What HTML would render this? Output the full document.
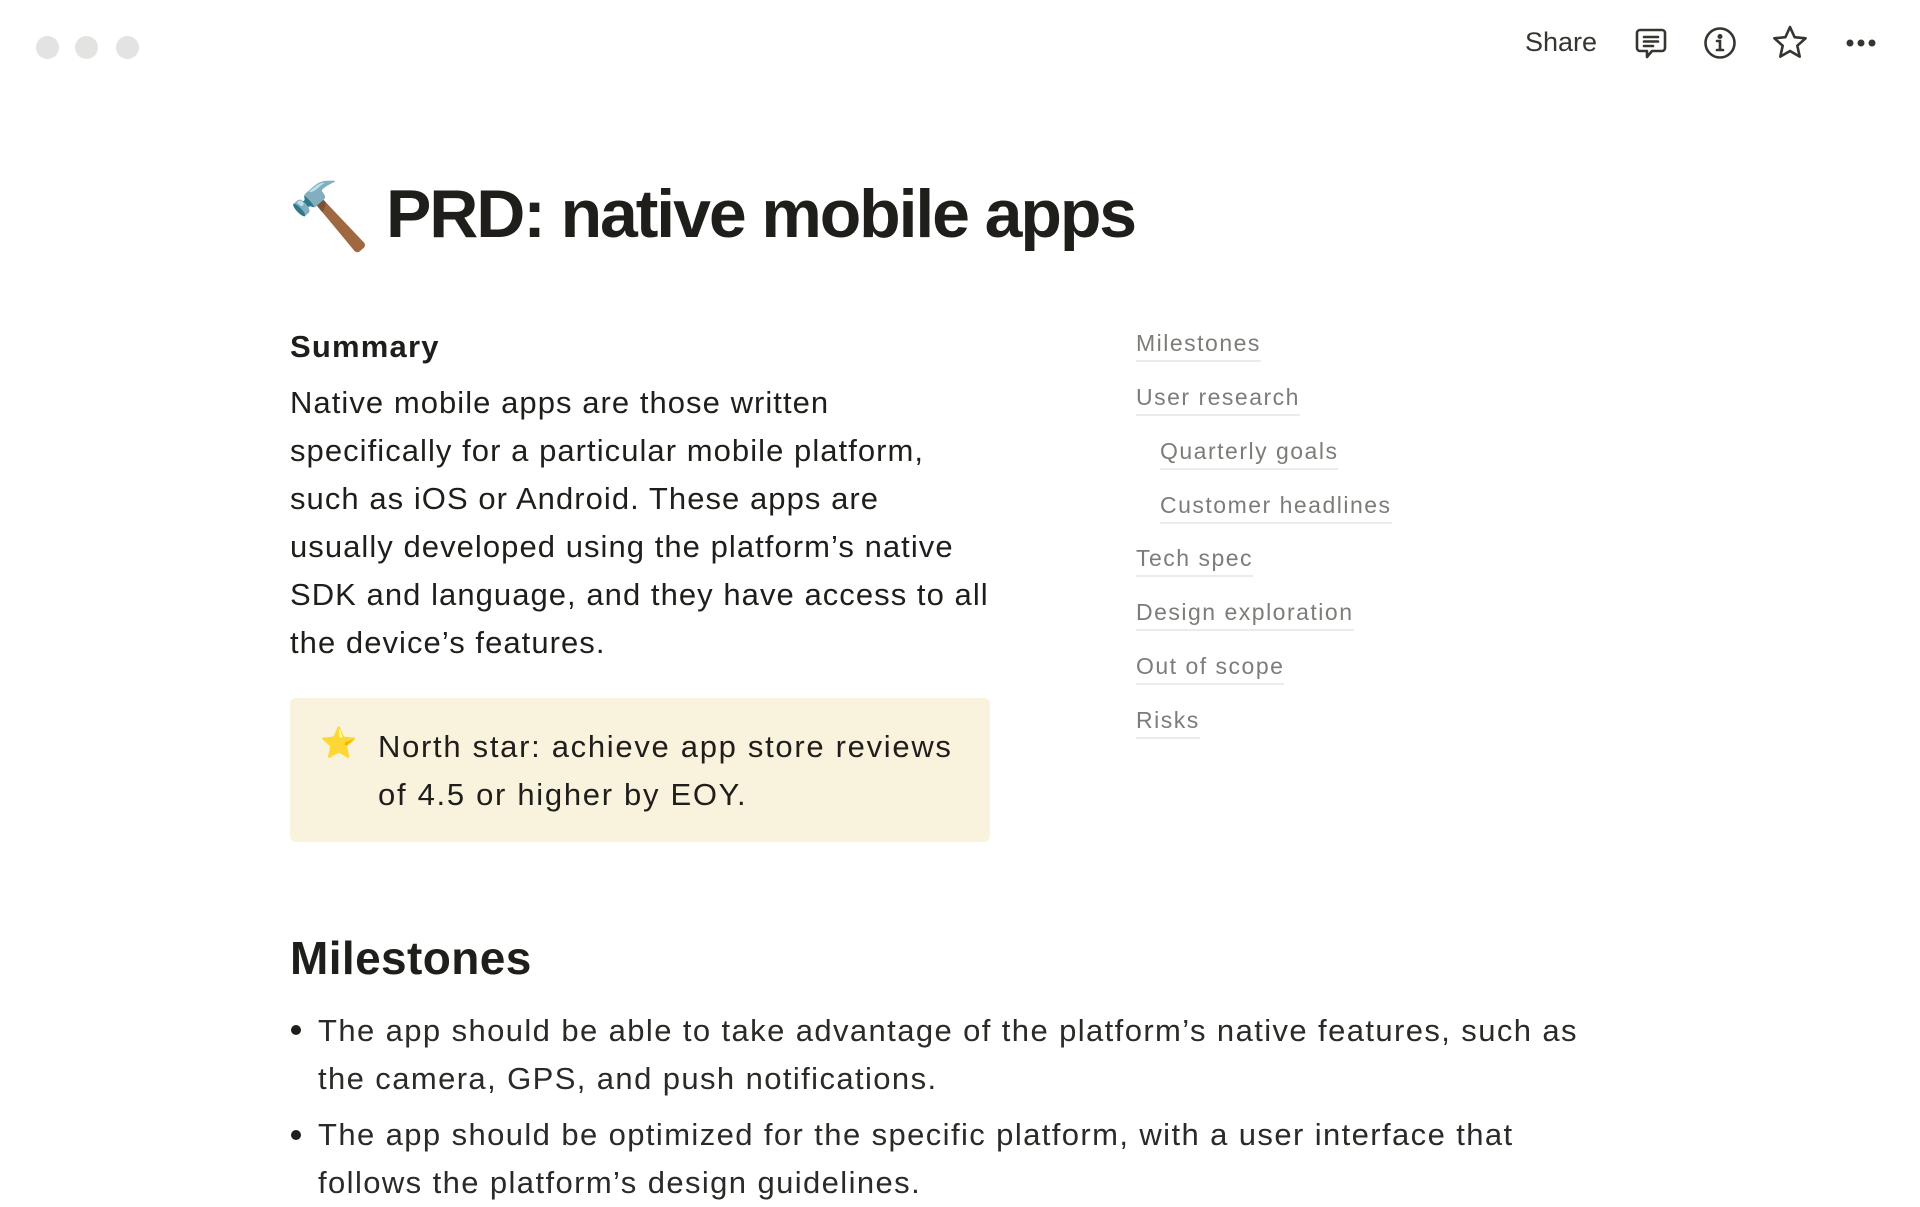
<!DOCTYPE html>
<html><head><meta charset="utf-8"><style>
*{margin:0;padding:0;box-sizing:border-box}
body{width:1920px;height:1200px;background:#fff;font-family:"Liberation Sans",sans-serif;color:#1f1e1b;position:relative;overflow:hidden}
.a{position:absolute;white-space:nowrap}
.dot{position:absolute;width:23px;height:23px;border-radius:50%;background:#e3e3e2;top:36px}
.toc{position:absolute;font-size:23px;color:#7d7c78;line-height:30px;border-bottom:2px solid #ebebea;padding-bottom:2px;letter-spacing:1.5px}
.body{font-size:31px;line-height:48px;letter-spacing:1.05px}
</style></head><body>
<div class="dot" style="left:36px"></div>
<div class="dot" style="left:75px"></div>
<div class="dot" style="left:116px"></div>
<div class="a" style="left:1525px;top:27px;font-size:27px;color:#37352f">Share</div>
<svg class="a" style="left:1633px;top:26px" width="36" height="36" viewBox="0 0 36 36" fill="none" stroke="#37352f" stroke-width="2.6" stroke-linejoin="round" stroke-linecap="round"><path d="M7 4h22a3 3 0 0 1 3 3v15a3 3 0 0 1-3 3H19l-5 6v-6H7a3 3 0 0 1-3-3V7a3 3 0 0 1 3-3z"/><path d="M11 11h14M11 15.5h14M11 20h9"/></svg>
<svg class="a" style="left:1703px;top:26px" width="34" height="34" viewBox="0 0 34 34" fill="none" stroke="#37352f" stroke-width="2.6" stroke-linecap="round"><circle cx="17" cy="17" r="14.5"/><circle cx="17" cy="10.5" r="1.2" fill="#37352f"/><path d="M14 15h3v9M14 24h6"/></svg>
<svg class="a" style="left:1771px;top:24px" width="38" height="38" viewBox="0 0 38 38" fill="none" stroke="#37352f" stroke-width="2.6" stroke-linejoin="round"><path d="M19 3l4.6 10.2 11 1.1-8.3 7.4 2.4 10.9L19 27l-9.7 5.6 2.4-10.9-8.3-7.4 11-1.1z"/></svg>
<svg class="a" style="left:1845px;top:38px" width="34" height="10" viewBox="0 0 34 10" fill="#37352f"><circle cx="5" cy="5" r="3.5"/><circle cx="16" cy="5" r="3.5"/><circle cx="27" cy="5" r="3.5"/></svg>

<div class="a" style="left:288px;top:176px;font-size:66px;line-height:80px">🔨</div>
<div class="a" style="left:386px;top:172px;font-size:68px;font-weight:bold;line-height:84px;letter-spacing:-2.1px;color:#1f1e1b">PRD: native mobile apps</div>

<div class="a" style="left:290px;top:328px;font-size:31px;font-weight:bold;line-height:38px;letter-spacing:1.2px">Summary</div>
<div class="a body" style="left:290px;top:379px">Native mobile apps are those written<br>specifically for a particular mobile platform,<br>such as iOS or Android. These apps are<br>usually developed using the platform’s native<br>SDK and language, and they have access to all<br>the device’s features.</div>

<div class="a" style="left:290px;top:698px;width:700px;height:144px;background:#f9f2dd;border-radius:6px"></div>
<div class="a" style="left:320px;top:724px;font-size:30px;line-height:40px">⭐</div>
<div class="a body" style="left:378px;top:723px;letter-spacing:1.7px">North star: achieve app store reviews<br>of 4.5 or higher by EOY.</div>

<div class="toc" style="left:1136px;top:328px">Milestones</div>
<div class="toc" style="left:1136px;top:382px">User research</div>
<div class="toc" style="left:1160px;top:436px">Quarterly goals</div>
<div class="toc" style="left:1160px;top:490px">Customer headlines</div>
<div class="toc" style="left:1136px;top:543px">Tech spec</div>
<div class="toc" style="left:1136px;top:597px">Design exploration</div>
<div class="toc" style="left:1136px;top:651px">Out of scope</div>
<div class="toc" style="left:1136px;top:705px">Risks</div>

<div class="a" style="left:290px;top:930px;font-size:46px;font-weight:bold;line-height:56px;letter-spacing:0.4px">Milestones</div>
<div class="a" style="left:291px;top:1025px;width:10px;height:10px;border-radius:50%;background:#1f1e1b"></div>
<div class="a body" style="left:318px;top:1007px;color:#2b2a27;letter-spacing:1.4px">The app should be able to take advantage of the platform’s native features, such as<br>the camera, GPS, and push notifications.</div>
<div class="a" style="left:291px;top:1130px;width:10px;height:10px;border-radius:50%;background:#1f1e1b"></div>
<div class="a body" style="left:318px;top:1111px;color:#2b2a27;letter-spacing:1.4px">The app should be optimized for the specific platform, with a user interface that<br>follows the platform’s design guidelines.</div>
</body></html>
